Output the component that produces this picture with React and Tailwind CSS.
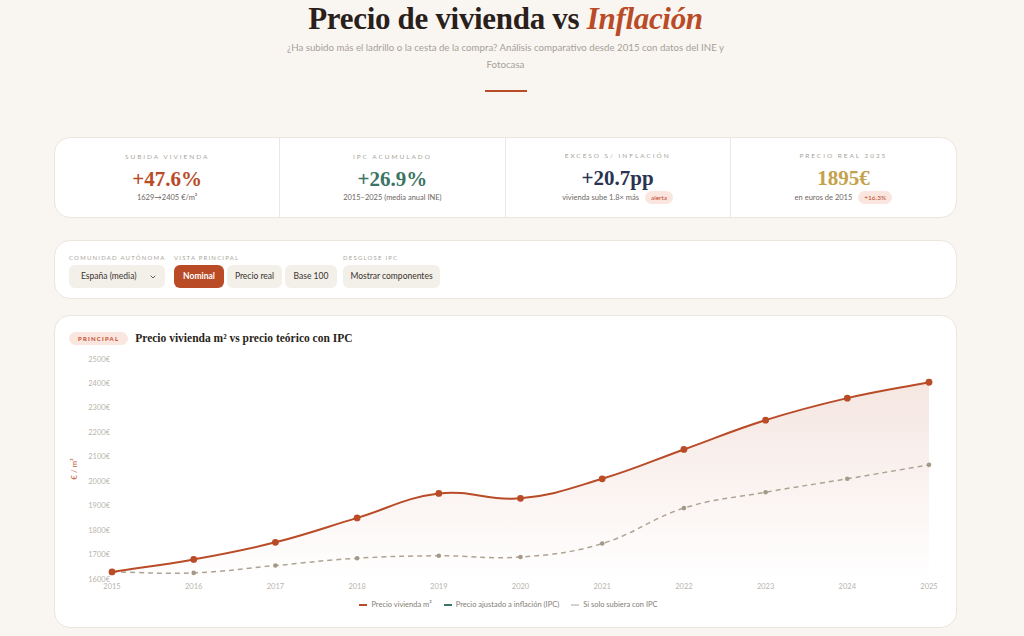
import React from "react";

const X0 = 112, XSTEP = (929 - 112) / 10;
const yOf = (v) => 580 - (v - 1600) * 0.2444;
const years = [2015, 2016, 2017, 2018, 2019, 2020, 2021, 2022, 2023, 2024, 2025];
const nominal = [1629, 1680, 1750, 1850, 1950, 1930, 2010, 2130, 2250, 2340, 2405];
const ipc = [1629, 1625, 1655, 1685, 1695, 1690, 1745, 1890, 1955, 2010, 2067];

function splinePath(vals, tension = 0.4) {
  const pts = vals.map((v, i) => ({ x: X0 + i * XSTEP, y: yOf(v) }));
  const cps = pts.map((cur, i) => {
    const prev = pts[i - 1] || cur;
    const next = pts[i + 1] || cur;
    const d01 = Math.hypot(cur.x - prev.x, cur.y - prev.y);
    const d12 = Math.hypot(next.x - cur.x, next.y - cur.y);
    const s01 = d01 / (d01 + d12 || 1);
    const s12 = d12 / (d01 + d12 || 1);
    const fa = tension * s01;
    const fb = tension * s12;
    return {
      px: cur.x - fa * (next.x - prev.x),
      py: cur.y - fa * (next.y - prev.y),
      nx: cur.x + fb * (next.x - prev.x),
      ny: cur.y + fb * (next.y - prev.y),
    };
  });
  let d = `M${pts[0].x},${pts[0].y}`;
  for (let i = 1; i < pts.length; i++) {
    d += ` C${cps[i - 1].nx},${cps[i - 1].ny} ${cps[i].px},${cps[i].py} ${pts[i].x},${pts[i].y}`;
  }
  return { d, pts };
}

function Stat({ label, value, color, sub, badge, last }) {
  return (
    <div className={`flex flex-col items-center justify-center ${last ? "" : "border-r border-[#ece7e0]"}`}>
      <div className="text-[6.5px] tracking-[0.3em] text-[#a9a39b] uppercase">{label}</div>
      <div className={`mt-[5px] text-[21px] leading-[24px] font-bold ${color}`} style={{ fontFamily: '"Liberation Serif", serif' }}>
        {value}
      </div>
      <div className="mt-[1px] flex items-center gap-[6px] text-[7.5px] text-[#6d665f]">
        <span>{sub}</span>
        {badge && (
          <span className="rounded-full bg-[#fbe6df] px-[6px] py-[2px] text-[6.5px] text-[#c2472a]">{badge}</span>
        )}
      </div>
    </div>
  );
}

function Chart() {
  const nom = splinePath(nominal);
  const inf = splinePath(ipc);
  const area = `${nom.d} L929,580 L112,580 Z`;
  const yTicks = [2500, 2400, 2300, 2200, 2100, 2000, 1900, 1800, 1700, 1600];
  return (
    <svg width="901" height="246" viewBox="55 350 901 246" className="block">
      <defs>
        <linearGradient id="g" x1="0" y1="383" x2="0" y2="580" gradientUnits="userSpaceOnUse">
          <stop offset="0" stopColor="#b94b27" stopOpacity="0.14" />
          <stop offset="1" stopColor="#b94b27" stopOpacity="0" />
        </linearGradient>
      </defs>
      {yTicks.map((t) => (
        <text key={t} x="110" y={yOf(t) + 2.5} textAnchor="end" fontSize="7.5" fill="#bab4ac" fontFamily="Lato, sans-serif">
          {t}€
        </text>
      ))}
      {years.map((y, i) => (
        <text key={y} x={X0 + i * XSTEP} y="590" textAnchor="middle" fontSize="7.5" fill="#bab4ac" fontFamily="Lato, sans-serif">
          {y}
        </text>
      ))}
      <text x="77" y="470" transform="rotate(-90 77 470)" textAnchor="middle" fontSize="8" fill="#c0603c" fontFamily="Lato, sans-serif">
        € / m²
      </text>
      <path d={area} fill="url(#g)" />
      <path d={inf.d} fill="none" stroke="#aea393" strokeWidth="1.5" strokeDasharray="5 4" />
      {inf.pts.map((p, i) => (
        <circle key={i} cx={p.x} cy={p.y} r="2.3" fill="#a49988" />
      ))}
      <path d={nom.d} fill="none" stroke="#b94b27" strokeWidth="2" />
      {nom.pts.map((p, i) => (
        <circle key={i} cx={p.x} cy={p.y} r="3.4" fill="#b94b27" />
      ))}
    </svg>
  );
}

export default function App() {
  return (
    <div className="min-h-[636px] bg-[#f9f6f2] text-[#2b2420]" style={{ fontFamily: 'Lato, "Noto Sans", sans-serif' }}>
      <div className="ml-[54px] w-[903px] pb-[8px]">
        <div className="flex flex-col items-center">
          <h1 className="mt-[0px] text-[31px] leading-[38px] font-bold tracking-[-0.01em] text-[#2a1f1a]" style={{ fontFamily: '"Liberation Serif", serif' }}>
            Precio de vivienda vs <span className="italic text-[#b94b27]">Inflación</span>
          </h1>
          <p className="mt-[1px] w-[520px] text-center text-[9.7px] leading-[17px] text-[#a59f97]">
            ¿Ha subido más el ladrillo o la cesta de la compra? Análisis comparativo desde 2015 con datos del INE y
            <br />
            Fotocasa
          </p>
          <div className="mt-[17px] h-[2px] w-[42px] bg-[#b94b27]" />
        </div>

        <div className="mt-[45px] grid h-[81px] grid-cols-4 rounded-2xl border border-[#ebe5de] bg-white">
          <Stat label="Subida vivienda" value="+47.6%" color="text-[#b94b27]" sub="1629→2405 €/m²" />
          <Stat label="IPC acumulado" value="+26.9%" color="text-[#3b7464]" sub="2015–2025 (media anual INE)" />
          <Stat label="Exceso s/ inflación" value="+20.7pp" color="text-[#2a3452]" sub="vivienda sube 1.8× más" badge="alerta" />
          <Stat label="Precio real 2025" value="1895€" color="text-[#c4a24b]" sub="en euros de 2015" badge="+16.3%" last />
        </div>

        <div className="mt-[22px] flex h-[59px] items-start rounded-2xl border border-[#ebe5de] bg-white px-[14px] pt-[12px]">
          <div className="flex w-[96px] flex-col gap-[3px]">
            <div className="whitespace-nowrap text-[6px] tracking-[0.2em] text-[#aaa49c]">COMUNIDAD AUTÓNOMA</div>
            <div className="flex h-[23px] w-[96px] items-center justify-between rounded-[6px] bg-[#f3efe9] pl-[12px] pr-[8px] text-[8.5px] text-[#3a332d]">
              <span>España (media)</span>
              <svg width="8" height="8" viewBox="0 0 24 24" fill="none" stroke="#4a423b" strokeWidth="2.5" strokeLinecap="round" strokeLinejoin="round">
                <path d="M6 9l6 6 6-6" />
              </svg>
            </div>
          </div>
          <div className="ml-[9px] flex flex-col gap-[3px]">
            <div className="whitespace-nowrap text-[6px] tracking-[0.2em] text-[#aaa49c]">VISTA PRINCIPAL</div>
            <div className="flex gap-[3px]">
              <div className="flex h-[23px] w-[50px] items-center justify-center rounded-[6px] bg-[#b94b27] text-[8.5px] font-bold text-white">Nominal</div>
              <div className="flex h-[23px] w-[55px] items-center justify-center rounded-[6px] bg-[#f3efe9] text-[8.5px] text-[#3a332d]">Precio real</div>
              <div className="flex h-[23px] w-[52px] items-center justify-center rounded-[6px] bg-[#f3efe9] text-[8.5px] text-[#3a332d]">Base 100</div>
            </div>
          </div>
          <div className="ml-[6px] flex flex-col gap-[3px]">
            <div className="whitespace-nowrap text-[6px] tracking-[0.2em] text-[#aaa49c]">DESGLOSE IPC</div>
            <div className="flex h-[23px] w-[97px] items-center justify-center rounded-[6px] bg-[#f3efe9] text-[8.5px] text-[#3a332d]">Mostrar componentes</div>
          </div>
        </div>

        <div className="mt-[16px] h-[313px] rounded-2xl border border-[#ebe5de] bg-white pt-[14px]">
          <div className="flex items-center gap-[7px] pl-[14px]">
            <span className="rounded-full bg-[#fbe6df] px-[9px] py-[2px] text-[6px] font-bold tracking-[0.2em] text-[#c2472a]">PRINCIPAL</span>
            <span className="text-[11.5px] font-bold text-[#2a1f1a]" style={{ fontFamily: '"Liberation Serif", serif' }}>
              Precio vivienda m² vs precio teórico con IPC
            </span>
          </div>
          <div className="mt-[2px]">
            <Chart />
          </div>
          <div className="mt-[4px] flex justify-center gap-[12px] pl-[6px] text-[7.5px] text-[#857e76]">
            <div className="flex items-center gap-[4px]"><span className="h-[2px] w-[8px] bg-[#b94b27]" />Precio vivienda m²</div>
            <div className="flex items-center gap-[4px]"><span className="h-[2px] w-[8px] bg-[#3b7464]" />Precio ajustado a inflación (IPC)</div>
            <div className="flex items-center gap-[4px]"><span className="h-[2px] w-[8px] bg-[#d8d2ca]" />Si solo subiera con IPC</div>
          </div>
        </div>
      </div>
    </div>
  );
}
